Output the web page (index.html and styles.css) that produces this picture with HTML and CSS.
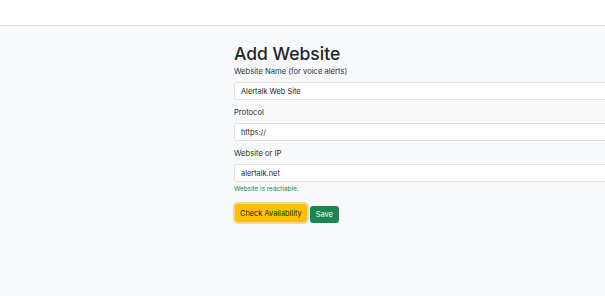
FILE: index.html
```html
<!DOCTYPE html>
<html lang="en">
<head>
    <meta charset="UTF-8">
    <meta name="viewport" content="width=device-width, initial-scale=1.0">
    <title>Add Website</title>
    <link rel="stylesheet" href="styles.css">
</head>
<body>
    <div class="topbar"></div>
    <div class="page">
        <form class="site-form">
            <h3>Add Website</h3>
            <div class="field">
                <label>Website Name (for voice alerts)</label>
                <input type="text" value="Alertalk Web Site">
            </div>
            <div class="field">
                <label>Protocol</label>
                <input type="text" value="https://">
            </div>
            <div class="field last">
                <label>Website or IP</label>
                <input type="text" value="alertalk.net">
                <div class="help">Website is reachable.</div>
            </div>
            <div class="actions">
                <button type="button" class="btn check">Check Availability</button>
                <button type="button" class="btn save">Save</button>
            </div>
        </form>
    </div>
</body>
</html>
```

FILE: styles.css
```css
html, body {
    margin: 0;
    height: 100%;
    overflow: hidden;
}

body {
    font-family: Inter, "Noto Sans", sans-serif;
    background-color: #f8f9fa;
    color: #212529;
}

.topbar {
    height: 25px;
    background-color: #fff;
    border-bottom: 1px solid #dee2e6;
}

.page {
    padding: 17px 0 0 234px;
}

.site-form {
    width: 420px;
}

h3 {
    margin: 0;
    font-size: 17.5px;
    font-weight: 500;
    line-height: 21px;
    margin-bottom: 2px;
}

.field {
    margin-bottom: 7px;
}

.field.last {
    margin-bottom: 0;
}

label {
    display: block;
    font-size: 7.6px;
    line-height: 11px;
    margin-bottom: 5px;
    color: #2b3035;
}

input {
    display: block;
    box-sizing: border-box;
    width: 100%;
    height: 18px;
    padding: 0 6px;
    border: 1px solid #dee2e6;
    border-radius: 3px;
    background-color: #fff;
    font-family: inherit;
    font-size: 7.4px;
    color: #212529;
}

.help {
    margin-top: 3px;
    font-size: 6.4px;
    line-height: 9px;
    color: #198754;
}

.actions {
    display: flex;
    align-items: flex-end;
    margin-top: 10px;
}

.btn {
    border: none;
    border-radius: 3px;
    font-family: inherit;
    font-size: 7.4px;
    padding: 0 6px;
    cursor: pointer;
}

.check {
    height: 18px;
    padding: 0 5px;
    margin-left: 1px;
    margin-bottom: 1px;
    background-color: #ffc107;
    color: #212529;
    box-shadow: 0 0 0 2px rgba(232, 190, 80, 0.55);
}

.save {
    height: 17px;
    margin-left: 3px;
    background-color: #198754;
    color: #fff;
}
```
